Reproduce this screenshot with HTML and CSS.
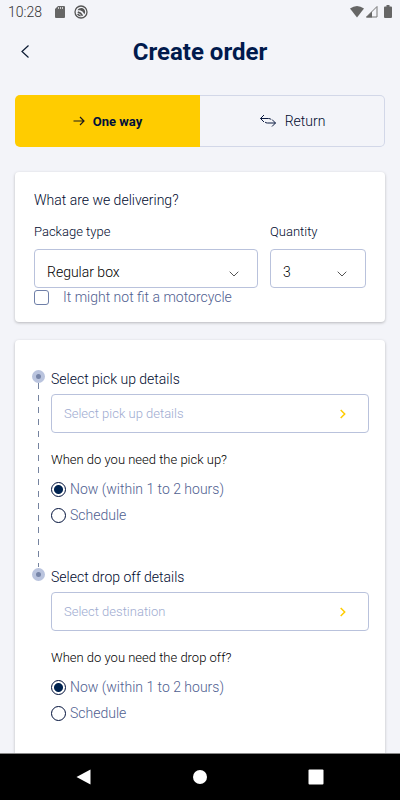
FILE: index.html
```html
<!DOCTYPE html>
<html lang="en">
<head>
  <meta charset="utf-8">
  <meta name="viewport" content="width=device-width, initial-scale=1">
  <title>Create order</title>
  <link rel="stylesheet" href="styles.css">
</head>
<body>
  <div class="status">
    <span class="clock">10:28</span>
    <svg class="status-sd" width="12" height="14" viewBox="0 0 12 14" aria-hidden="true">
      <path fill="#666" d="M4 1h6q1 0 1 1v10q0 1-1 1H2q-1 0-1-1V4z"/>
      <path stroke="#ccc" d="M4.500 2v2M6.500 2v2M8.500 2v2"/>
    </svg>
    <svg width="14" height="14" viewBox="0 0 14 14" fill="none" aria-hidden="true">
      <circle cx="7" cy="7" r="6" stroke="#555" stroke-width="1.300"/>
      <path fill="#555" d="M3.500 5.200C5 2.500 9 2.300 10.600 5c.8 1.500.6 3-.2 4.300L8.500 6.600 6 5.300z"/>
      <path stroke="#555" stroke-width="1.500" d="M3.800 7l2.700 1.200 2 2.600M3.600 8.800q1 1.700 3 2"/>
    </svg>
    <span class="status-right">
      <svg width="16" height="14" viewBox="0 0 16 14" aria-hidden="true"><path fill="#666" d="M1 3.500Q8-1.500 15 3.500L8 12.500z"/></svg>
      <svg width="13" height="14" viewBox="0 0 13 14" aria-hidden="true">
        <path fill="none" stroke="#777" d="M12 1.500v10.500H1.500z"/><path fill="#666" d="M7 6.500V12.500H1z"/>
      </svg>
      <svg class="status-battery" width="8" height="14" viewBox="0 0 8 14" aria-hidden="true"><path fill="#666" d="M2.500 0h3v1.500H7q1 0 1 1v9.500q0 1-1 1H1q-1 0-1-1V2.500q0-1 1-1h1.500z"/></svg>
    </span>
  </div>

  <header class="header">
    <button class="back" type="button" aria-label="Back">
      <svg width="10" height="14" viewBox="0 0 10 14" fill="none" stroke="#0b1a33" stroke-width="1.200"><path d="M8.500 0.500L2 6.500l6.500 6"/></svg>
    </button>
    <h1 class="title">Create order</h1>
  </header>

  <main class="content">
    <div class="tabs">
      <button class="tab tab-active" type="button" aria-pressed="true">
        <svg width="12" height="10" viewBox="0 0 12 10" fill="none" stroke="#1c1a1c" stroke-width="1.200"><path d="M.5 5H11M7 1l4 4-4 4"/></svg>
        One way
      </button>
      <button class="tab" type="button" aria-pressed="false">
        <svg width="18" height="14" viewBox="0 0 18 14" fill="none" stroke="#0b1a40"><path d="M5 1L1.500 4.500 5 8M1.500 4.500h8q2 0 2.500 1M13 5.500L16.500 9 13 12.500M16.500 9h-8q-2 0-2.500-1"/></svg>
        Return
      </button>
    </div>

    <section class="card package">
      <h2 class="heading">What are we delivering?</h2>
      <div class="package-fields">
        <div>
          <label class="label" for="type">Package type</label>
          <div class="select">
            <select id="type"><option>Regular box</option></select>
            <svg class="caret" width="10" height="6" viewBox="0 0 10 6" fill="none" stroke="#555"><path d="M.7.700L5 5 9.300.700"/></svg>
          </div>
        </div>
        <div>
          <label class="label" for="quantity">Quantity</label>
          <div class="select">
            <select id="quantity"><option>3</option></select>
            <svg class="caret" width="10" height="6" viewBox="0 0 10 6" fill="none" stroke="#555"><path d="M.7.700L5 5 9.300.700"/></svg>
          </div>
        </div>
      </div>
      <label class="check"><input type="checkbox"> It might not fit a motorcycle</label>
    </section>

    <section class="card route">
      <div class="stop">
        <div class="rail" aria-hidden="true"><span class="dot"></span><span class="dashes"></span></div>
        <div class="stop-body">
          <h2 class="heading">Select pick up details</h2>
          <button class="picker" type="button">Select pick up details
            <svg width="6" height="10" viewBox="0 0 6 10" fill="none" stroke="#fc0" stroke-width="1.500"><path d="M.7 1l4 4-4 4"/></svg>
          </button>
          <fieldset class="timing">
            <legend class="label">When do you need the pick up?</legend>
            <label class="choice"><input type="radio" name="pickup" checked> Now (within 1 to 2 hours)</label>
            <label class="choice"><input type="radio" name="pickup"> Schedule</label>
          </fieldset>
        </div>
      </div>
      <div class="stop">
        <div class="rail" aria-hidden="true"><span class="dot"></span></div>
        <div class="stop-body">
          <h2 class="heading">Select drop off details</h2>
          <button class="picker" type="button">Select destination
            <svg width="6" height="10" viewBox="0 0 6 10" fill="none" stroke="#fc0" stroke-width="1.500"><path d="M.7 1l4 4-4 4"/></svg>
          </button>
          <fieldset class="timing">
            <legend class="label">When do you need the drop off?</legend>
            <label class="choice"><input type="radio" name="dropoff" checked> Now (within 1 to 2 hours)</label>
            <label class="choice"><input type="radio" name="dropoff"> Schedule</label>
          </fieldset>
        </div>
      </div>
    </section>
  </main>

  <nav class="system-nav">
    <button type="button" aria-label="System back"><svg width="16" height="16" viewBox="0 0 16 16"><path fill="#fff" d="M14.500.500v15L.5 8z"/></svg></button>
    <button type="button" aria-label="Home"><svg width="16" height="16" viewBox="0 0 16 16"><circle cx="8" cy="8" r="7" fill="#fff"/></svg></button>
    <button type="button" aria-label="Recent apps"><svg width="16" height="16" viewBox="0 0 16 16"><rect x=".5" y=".5" width="15" height="15" rx="1" fill="#fff"/></svg></button>
  </nav>
</body>
</html>
```
FILE: styles.css
```css
* {
  box-sizing: border-box;
}

body {
  margin: 0;
  min-height: 100vh;
  display: flex;
  flex-direction: column;
  background: #f3f4f9;
  color: #000a2e;
  font-family: Roboto, "Liberation Sans", sans-serif;
  font-size: 14px;
  font-weight: 300;
}

button,
select,
input {
  font: inherit;
  color: inherit;
}

button {
  border: 0;
  padding: 0;
  background: none;
}

svg {
  display: block;
  flex: none;
}

.status {
  display: flex;
  align-items: center;
  height: 24px;
  padding: 0 8px;
  color: #333;
}

.clock {
  width: 46px;
}

.status-sd {
  margin-right: 8px;
}

.status-right {
  display: flex;
  margin-left: auto;
}

.status-battery {
  margin-left: 6px;
}

.header {
  display: grid;
  grid-template-columns: 50px 1fr 50px;
  align-items: center;
  height: 56px;
}

.back {
  justify-self: center;
  padding: 8px;
}

.title {
  margin: 0;
  font-size: 24px;
  line-height: 28px;
  font-weight: 700;
  text-align: center;
  color: #001a4d;
}

.content {
  flex: 1;
  display: flex;
  flex-direction: column;
  padding: 15px 15px 0;
}

.tabs {
  display: grid;
  grid-template-columns: 1fr 1fr;
  height: 52px;
  margin-bottom: 25px;
}

.tab {
  display: flex;
  align-items: center;
  justify-content: center;
  gap: 8px;
  border: 1px solid #d2d7e8;
  border-left: 0;
  border-radius: 0 5px 5px 0;
}

.tab-active {
  background: #fc0;
  border: 0;
  border-radius: 5px 0 0 5px;
  color: #00103a;
  font-size: 13px;
  font-weight: 700;
}

.card {
  background: #fff;
  border-radius: 4px;
  box-shadow: 0 1px 3px rgba(0, 0, 0, 0.25);
}

.package {
  margin-bottom: 18px;
  padding: 18px 19px 16px;
}

.heading {
  margin: 0;
  font-size: 14px;
  line-height: 20px;
  font-weight: inherit;
}

.label {
  display: block;
  padding: 0;
  font-size: 13px;
  line-height: 20px;
}

.package-fields {
  display: grid;
  grid-template-columns: 7fr 3fr;
  gap: 12px;
  margin-top: 12px;
}

.select {
  position: relative;
  margin-top: 7px;
}

.select select {
  display: block;
  width: 100%;
  height: 39px;
  padding: 7px 12px 0;
  appearance: none;
  border: 1px solid #b9c2dc;
  border-radius: 4px;
  background: #fff;
  color: #000;
}

.caret {
  position: absolute;
  right: 19px;
  top: 22px;
  pointer-events: none;
}

.check {
  display: flex;
  align-items: center;
  gap: 14px;
  height: 18px;
  color: #4f6090;
}

.check input {
  appearance: none;
  width: 15px;
  height: 15px;
  margin: 0;
  border: 1px solid #6f7fa8;
  border-radius: 3px;
}

.route {
  flex: 1;
  padding: 29px 16px 24px;
  border-radius: 4px 4px 0 0;
}

.stop {
  display: flex;
  gap: 6px;
}

.stop + .stop .timing {
  padding-bottom: 0;
}

.rail {
  display: flex;
  flex-direction: column;
  align-items: center;
  width: 14px;
}

.dot {
  width: 13px;
  height: 13px;
  margin-top: 1px;
  border: 4px solid #bac4de;
  border-radius: 50%;
  background: #7785a8;
}

.dashes {
  flex: 1;
  width: 1px;
  background: repeating-linear-gradient(#75839f 0 6px, transparent 6px 12px);
}

.stop-body {
  flex: 1;
}

.picker {
  display: flex;
  align-items: center;
  justify-content: space-between;
  width: 100%;
  height: 39px;
  margin-top: 5px;
  padding: 0 22px 0 12px;
  border: 1px solid #b9c2dc;
  border-radius: 4px;
  color: #9eabd0;
  font-size: 13px;
}

.timing {
  min-width: 0;
  margin: 17px 0 0;
  padding: 0 0 39px;
  border: 0;
}

.timing .label {
  margin-bottom: 6px;
  color: #000;
}

.choice {
  display: flex;
  align-items: center;
  gap: 4px;
  height: 26px;
  color: #4f6090;
}

.choice input {
  appearance: none;
  width: 15px;
  height: 15px;
  margin: 0;
  border: 1px solid #00103a;
  border-radius: 50%;
}

.choice input:checked {
  padding: 1px;
  background: radial-gradient(circle, #002350 4px, transparent 5px);
}

.system-nav {
  display: flex;
  align-items: center;
  justify-content: center;
  gap: 100px;
  height: 47px;
  border-top: 1px solid #888;
  background: #000;
}
```
